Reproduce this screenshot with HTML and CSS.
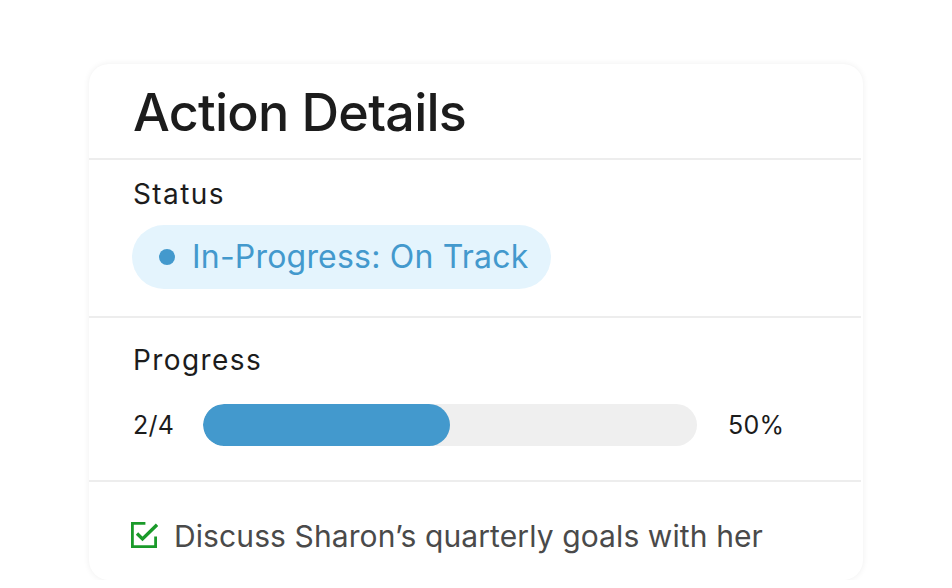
FILE: index.html
```html
<!DOCTYPE html>
<html>
<head>
<meta charset="utf-8">
<link rel="stylesheet" href="styles.css">
</head>
<body>
<div class="card">
  <div class="section header">
    <h1 class="title">Action Details</h1>
  </div>
  <div class="section status">
    <div class="label">Status</div>
    <div class="pill"><span class="dot"></span><span class="pill-text">In-Progress: On Track</span></div>
  </div>
  <div class="section progress">
    <div class="label">Progress</div>
    <div class="bar-row">
      <span class="count">2/4</span>
      <div class="track"><div class="fill" style="width:50%"></div></div>
      <span class="pct">50%</span>
    </div>
  </div>
  <div class="section task">
    <svg class="check" width="28" height="28" viewBox="0 0 28 28" fill="none">
      <path d="M14 2.4H2.4V25.6H25.6V17" stroke="#1a9a2a" stroke-width="2.8" stroke-linecap="square"/>
      <path d="M7 12.5l5.5 5.5L27 3.8" stroke="#1a9a2a" stroke-width="3.3"/>
    </svg>
    <span class="task-text">Discuss Sharon’s quarterly goals with her</span>
  </div>
</div>
</body>
</html>
```
FILE: styles.css
```css
html, body {
  margin: 0;
  padding: 0;
  background: #ffffff;
}
body {
  font-family: Inter, "Noto Sans", sans-serif;
  color: #1c1c1c;
  padding-top: 64px;
  padding-left: 89px;
}
.card {
  width: 774px;
  height: 516px;
  background: #fff;
  border-radius: 20px;
  box-shadow: 0 0 6px rgba(0, 0, 0, 0.07);
  box-sizing: border-box;
  overflow: hidden;
}
.section {
  padding-left: 44px;
  border-top: 2px solid #ededed;
  margin-right: 2px;
}
.header {
  border-top: none;
  height: 94px;
  box-sizing: border-box;
  padding-top: 17px;
}
.title {
  margin: 0;
  font-size: 52px;
  font-weight: 500;
  line-height: 63px;
  letter-spacing: -0.75px;
  color: #1c1c1c;
}
.label {
  font-size: 28px;
  line-height: 32px;
  font-weight: 400;
  letter-spacing: 1.4px;
  color: #1c1c1c;
}
.status {
  height: 158px;
  box-sizing: border-box;
  padding-top: 18px;
}
.pill {
  margin-top: 15px;
  display: inline-flex;
  align-items: center;
  height: 64px;
  border-radius: 32px;
  background: #e4f4fd;
  padding: 0 23px 0 27px;
  box-sizing: border-box;
  margin-left: -1px;
}
.dot {
  width: 16px;
  height: 16px;
  border-radius: 50%;
  background: #4399cd;
  margin-right: 17px;
}
.pill-text {
  font-size: 32px;
  color: #4399cd;
  line-height: 36px;
  letter-spacing: 0.2px;
}
.progress {
  height: 164px;
  box-sizing: border-box;
  padding-top: 26px;
}
.bar-row {
  display: flex;
  align-items: center;
  margin-top: 28px;
}
.count, .pct {
  font-size: 25px;
  letter-spacing: 0.3px;
  color: #1c1c1c;
}
.count {
  width: 70px;
}
.track {
  width: 494px;
  height: 42px;
  border-radius: 21px;
  background: #efefef;
  overflow: hidden;
}
.fill {
  height: 100%;
  background: #4399cd;
  border-radius: 21px;
}
.pct {
  margin-left: 31px;
}
.task {
  display: flex;
  align-items: center;
  height: 100px;
  box-sizing: border-box;
  padding-left: 41px;
  padding-top: 10px;
}
.check {
  flex: none;
  margin-top: -3px;
}
.task-text {
  margin-left: 16px;
  font-size: 30px;
  letter-spacing: 0.1px;
  color: #4a4a4a;
}
```
